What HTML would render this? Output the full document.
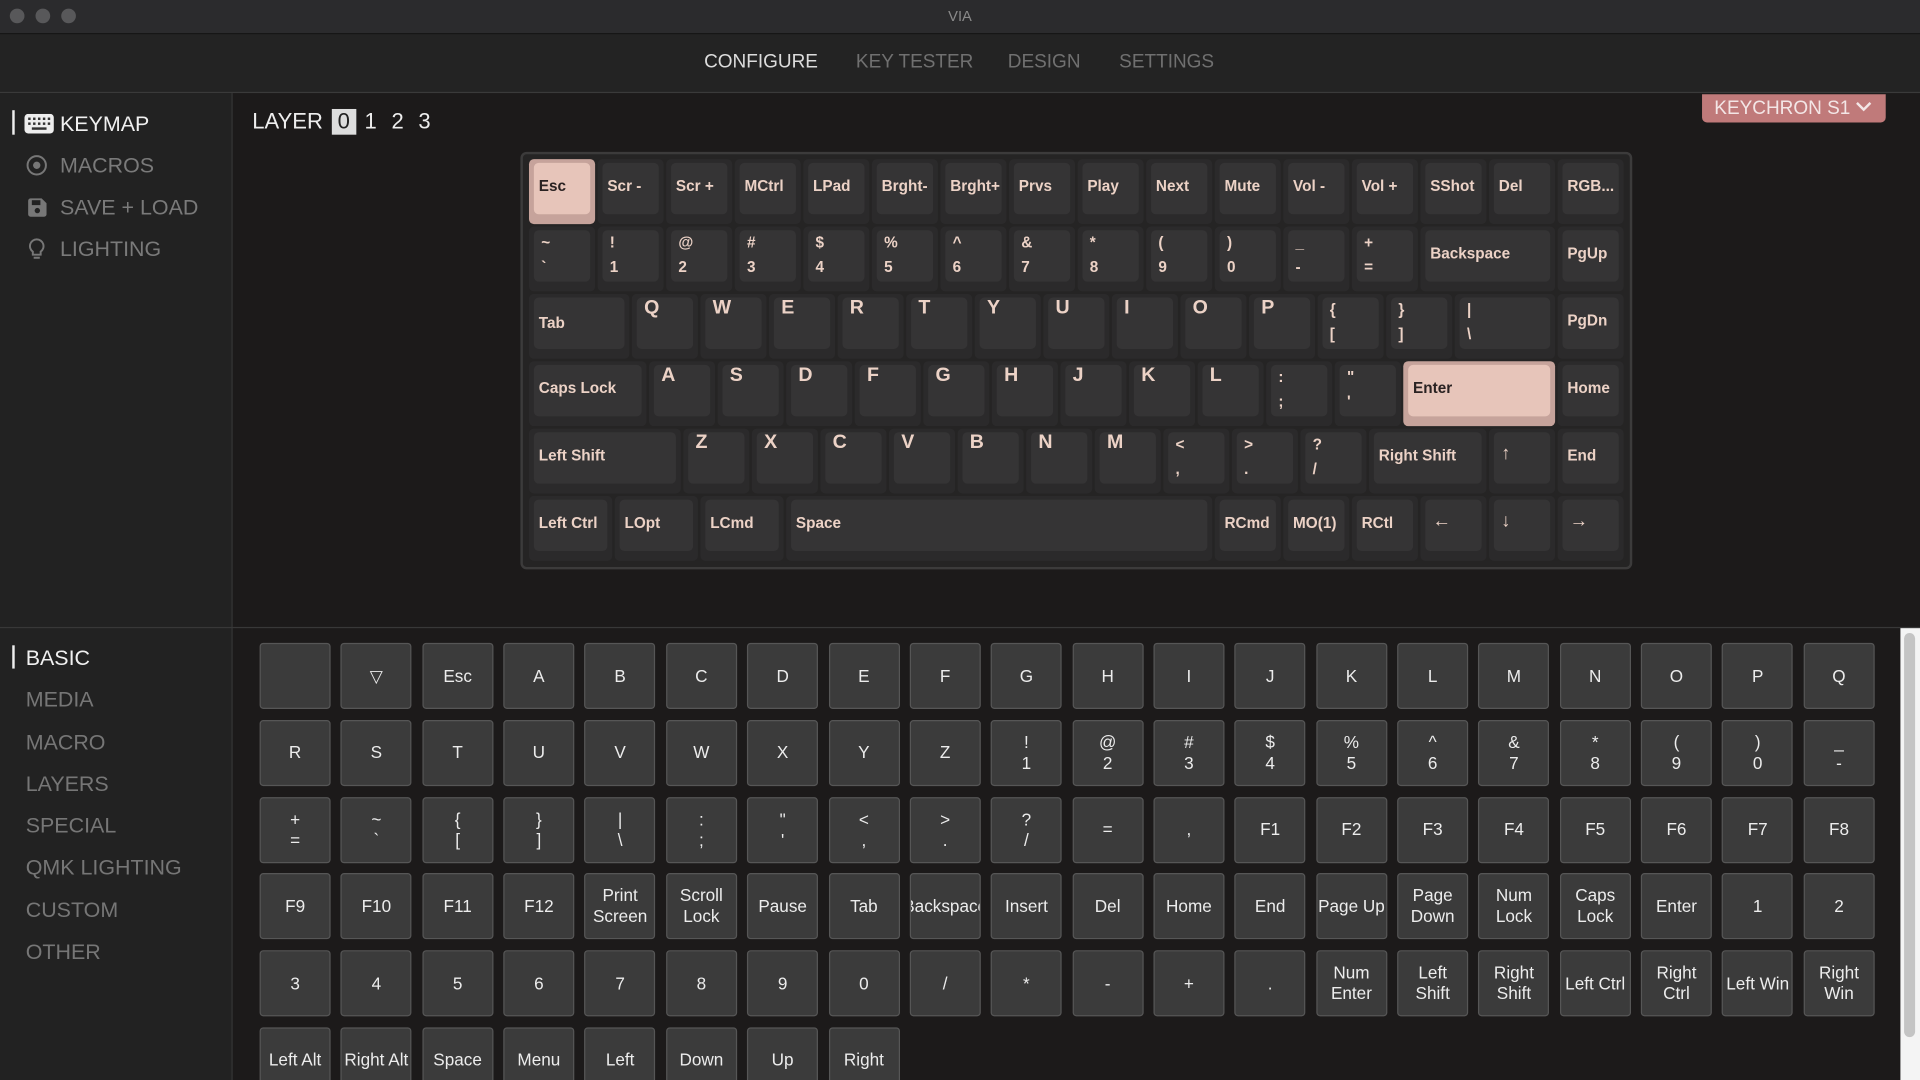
<!DOCTYPE html>
<html><head><meta charset="utf-8"><style>
html,body{margin:0;padding:0;background:#111;overflow:hidden;width:1920px;height:1080px}
#app{position:relative;width:1568px;height:882px;transform:scale(1.22449);transform-origin:0 0;overflow:hidden;background:#1c1a1a;font-family:"Liberation Sans",sans-serif}
.title{position:absolute;left:0;top:0;width:1568px;height:27px;background:#2b2b2d;border-bottom:1px solid #151515}
.dot{position:absolute;top:7px;width:12px;height:12px;border-radius:50%;background:#58585a}
.title .t{position:absolute;left:0;right:0;top:6px;text-align:center;color:#8a8a8a;font-size:12px}
.nav{position:absolute;left:0;top:28px;width:1568px;height:47px;background:#232323;border-bottom:1px solid #3a3a3a}
.nav span{position:absolute;top:14px;font-size:15.5px;color:#707070}
.side{position:absolute;left:0;top:76px;width:189px;height:806px;background:#222;border-right:1px solid #353535}
.hline{position:absolute;left:0;top:512px;width:1568px;height:1px;background:#383838}
.menu{position:absolute;left:49px;font-size:17.5px;color:#7a7a7a}
.menu.on{color:#f0f0f0}
.ic{position:absolute;left:20px}
.bar{position:absolute;left:10px;width:2px;background:#eee}
.cat{position:absolute;left:21px;font-size:17.5px;color:#767676}
.cat.on{color:#f0f0f0}
.layer{position:absolute;left:206px;top:89px;font-size:18px;color:#eee}
.layer b{font-weight:normal;display:inline-block;width:20px;text-align:center;margin-left:2px}
.layer b.sel{background:#ddd;color:#222}
.kb{position:absolute;left:425px;top:124px;width:904px;height:337px;background:#252424;border:2px solid #3c3b3b;border-radius:5px}
.r{position:absolute;left:0;height:53px}
.k{position:absolute;top:0;height:53px;width:54px;background:#2b2a2b;border-radius:4px}
.k .c{position:absolute;left:4px;right:4px;top:3px;bottom:8px;background:#353435;border-radius:4px}
.k i{position:absolute;left:8px;top:14px;font-style:normal;font-weight:bold;font-size:12.5px;color:#ecd2c6;white-space:nowrap;line-height:16px}
.k i.two{top:3px;line-height:20px;left:10px}
.k i.big{top:4px;font-size:16px;left:10px}
.k i.ar{font-size:15px;top:13px;left:10px}
.k.hl{background:#c6a39b}
.k.hl .c{background:#e7c5ba}
.k.hl i{color:#2a2222}
.btn{position:absolute;left:1390px;top:77px;width:150px;height:23px;background:#c07a7a;border-radius:0 0 4px 4px;color:#f3e6e6;font-size:15.5px;line-height:23px;padding-left:10px;box-sizing:border-box}
.grid{position:absolute;left:212px;top:525px;display:grid;grid-template-columns:repeat(20,58px);column-gap:8.37px;row-gap:8.8px;grid-auto-rows:54px}
.grid div{background:#3b3b3b;border:1px solid #565656;border-radius:3px;box-sizing:border-box;color:#ececec;font-size:14px;line-height:17px;display:flex;align-items:center;justify-content:center;text-align:center;overflow:hidden;white-space:nowrap}
.sb{position:absolute;left:1552px;top:513px;width:16px;height:369px;background:#f4f4f4}
.sb div{position:absolute;left:3px;top:4px;width:9px;height:330px;border-radius:5px;background:#c4c4c4}
</style></head><body><div id="app">
<div class="title"><div class="dot" style="left:8px"></div><div class="dot" style="left:29px"></div><div class="dot" style="left:50px"></div><div class="t">VIA</div></div>
<div class="nav"><span style="left:575px;color:#dcdcdc">CONFIGURE</span><span style="left:699px">KEY TESTER</span><span style="left:823px">DESIGN</span><span style="left:914px">SETTINGS</span></div>
<div class="side"></div>
<div class="hline"></div>
<div class="bar" style="top:90px;height:20px"></div>
<svg class="ic" style="top:93px" width="24" height="16" viewBox="0 0 24 16"><rect x="0" y="0" width="24" height="16" rx="3" fill="#eee"/><g fill="#333"><rect x="3" y="3" width="2" height="2"/><rect x="7" y="3" width="2" height="2"/><rect x="11" y="3" width="2" height="2"/><rect x="15" y="3" width="2" height="2"/><rect x="19" y="3" width="2" height="2"/><rect x="3" y="7" width="2" height="2"/><rect x="7" y="7" width="2" height="2"/><rect x="11" y="7" width="2" height="2"/><rect x="15" y="7" width="2" height="2"/><rect x="19" y="7" width="2" height="2"/><rect x="6" y="11" width="12" height="2"/></g></svg>
<div class="menu on" style="top:91px">KEYMAP</div>
<svg class="ic" style="top:126px;left:21px" width="18" height="18" viewBox="0 0 18 18"><circle cx="9" cy="9" r="7.5" fill="none" stroke="#777" stroke-width="1.6"/><circle cx="9" cy="9" r="3" fill="#777"/></svg>
<div class="menu" style="top:125px">MACROS</div>
<svg class="ic" style="top:161px;left:22px" width="17" height="17" viewBox="0 0 17 17"><path d="M1 3a2 2 0 0 1 2-2h9l4 4v9a2 2 0 0 1-2 2H3a2 2 0 0 1-2-2z" fill="#777"/><rect x="4" y="2.5" width="7" height="4" fill="#222"/><circle cx="8.5" cy="11" r="2.2" fill="#222"/></svg>
<div class="menu" style="top:159px">SAVE + LOAD</div>
<svg class="ic" style="top:194px;left:23px" width="14" height="19" viewBox="0 0 14 19"><path d="M7 1.5a5.5 5.5 0 0 0-3.2 10v2.5h6.4v-2.5A5.5 5.5 0 0 0 7 1.5z" fill="none" stroke="#777" stroke-width="1.6"/><path d="M4.5 16.5h5" stroke="#777" stroke-width="1.6"/></svg>
<div class="menu" style="top:193px">LIGHTING</div>

<div class="bar" style="top:527px;height:19px"></div>
<div class="cat on" style="top:527px">BASIC</div>
<div class="cat" style="top:561px">MEDIA</div>
<div class="cat" style="top:596px">MACRO</div>
<div class="cat" style="top:630px">LAYERS</div>
<div class="cat" style="top:664px">SPECIAL</div>
<div class="cat" style="top:698px">QMK LIGHTING</div>
<div class="cat" style="top:733px">CUSTOM</div>
<div class="cat" style="top:767px">OTHER</div>

<div class="layer">LAYER <b class="sel">0</b><b>1</b><b>2</b><b>3</b></div>
<div class="btn">KEYCHRON S1 <svg width="14" height="10" viewBox="0 0 14 10" style="vertical-align:1px"><path d="M1.5 2l5.5 5.5 5.5-5.5" fill="none" stroke="#f3e6e6" stroke-width="2"/></svg></div>

<div class="kb">
<div class="r" style="top:4px">
<div class="k hl" style="left:5px"><div class="c"></div><i>Esc</i></div>
<div class="k" style="left:61px"><div class="c"></div><i>Scr -</i></div>
<div class="k" style="left:117px"><div class="c"></div><i>Scr +</i></div>
<div class="k" style="left:173px"><div class="c"></div><i>MCtrl</i></div>
<div class="k" style="left:229px"><div class="c"></div><i>LPad</i></div>
<div class="k" style="left:285px"><div class="c"></div><i>Brght-</i></div>
<div class="k" style="left:341px"><div class="c"></div><i>Brght+</i></div>
<div class="k" style="left:397px"><div class="c"></div><i>Prvs</i></div>
<div class="k" style="left:453px"><div class="c"></div><i>Play</i></div>
<div class="k" style="left:509px"><div class="c"></div><i>Next</i></div>
<div class="k" style="left:565px"><div class="c"></div><i>Mute</i></div>
<div class="k" style="left:621px"><div class="c"></div><i>Vol -</i></div>
<div class="k" style="left:677px"><div class="c"></div><i>Vol +</i></div>
<div class="k" style="left:733px"><div class="c"></div><i>SShot</i></div>
<div class="k" style="left:789px"><div class="c"></div><i>Del</i></div>
<div class="k" style="left:845px"><div class="c"></div><i>RGB...</i></div>
</div>
<div class="r" style="top:59px">
<div class="k" style="left:5px"><div class="c"></div><i class="two">~<br>`</i></div>
<div class="k" style="left:61px"><div class="c"></div><i class="two">!<br>1</i></div>
<div class="k" style="left:117px"><div class="c"></div><i class="two">@<br>2</i></div>
<div class="k" style="left:173px"><div class="c"></div><i class="two">#<br>3</i></div>
<div class="k" style="left:229px"><div class="c"></div><i class="two">$<br>4</i></div>
<div class="k" style="left:285px"><div class="c"></div><i class="two">%<br>5</i></div>
<div class="k" style="left:341px"><div class="c"></div><i class="two">^<br>6</i></div>
<div class="k" style="left:397px"><div class="c"></div><i class="two">&amp;<br>7</i></div>
<div class="k" style="left:453px"><div class="c"></div><i class="two">*<br>8</i></div>
<div class="k" style="left:509px"><div class="c"></div><i class="two">(<br>9</i></div>
<div class="k" style="left:565px"><div class="c"></div><i class="two">)<br>0</i></div>
<div class="k" style="left:621px"><div class="c"></div><i class="two">_<br>-</i></div>
<div class="k" style="left:677px"><div class="c"></div><i class="two">+<br>=</i></div>
<div class="k" style="left:733px;width:110px"><div class="c"></div><i>Backspace</i></div>
<div class="k" style="left:845px"><div class="c"></div><i>PgUp</i></div>
</div>
<div class="r" style="top:114px">
<div class="k" style="left:5px;width:82px"><div class="c"></div><i style="top:16px">Tab</i></div>
<div class="k" style="left:89px"><div class="c"></div><i class="big">Q</i></div>
<div class="k" style="left:145px"><div class="c"></div><i class="big">W</i></div>
<div class="k" style="left:201px"><div class="c"></div><i class="big">E</i></div>
<div class="k" style="left:257px"><div class="c"></div><i class="big">R</i></div>
<div class="k" style="left:313px"><div class="c"></div><i class="big">T</i></div>
<div class="k" style="left:369px"><div class="c"></div><i class="big">Y</i></div>
<div class="k" style="left:425px"><div class="c"></div><i class="big">U</i></div>
<div class="k" style="left:481px"><div class="c"></div><i class="big">I</i></div>
<div class="k" style="left:537px"><div class="c"></div><i class="big">O</i></div>
<div class="k" style="left:593px"><div class="c"></div><i class="big">P</i></div>
<div class="k" style="left:649px"><div class="c"></div><i class="two">{<br>[</i></div>
<div class="k" style="left:705px"><div class="c"></div><i class="two">}<br>]</i></div>
<div class="k" style="left:761px;width:82px"><div class="c"></div><i class="two">|<br>\</i></div>
<div class="k" style="left:845px"><div class="c"></div><i>PgDn</i></div>
</div>
<div class="r" style="top:169px">
<div class="k" style="left:5px;width:96px"><div class="c"></div><i>Caps Lock</i></div>
<div class="k" style="left:103px"><div class="c"></div><i class="big">A</i></div>
<div class="k" style="left:159px"><div class="c"></div><i class="big">S</i></div>
<div class="k" style="left:215px"><div class="c"></div><i class="big">D</i></div>
<div class="k" style="left:271px"><div class="c"></div><i class="big">F</i></div>
<div class="k" style="left:327px"><div class="c"></div><i class="big">G</i></div>
<div class="k" style="left:383px"><div class="c"></div><i class="big">H</i></div>
<div class="k" style="left:439px"><div class="c"></div><i class="big">J</i></div>
<div class="k" style="left:495px"><div class="c"></div><i class="big">K</i></div>
<div class="k" style="left:551px"><div class="c"></div><i class="big">L</i></div>
<div class="k" style="left:607px"><div class="c"></div><i class="two">:<br>;</i></div>
<div class="k" style="left:663px"><div class="c"></div><i class="two">"<br>'</i></div>
<div class="k hl" style="left:719px;width:124px"><div class="c"></div><i>Enter</i></div>
<div class="k" style="left:845px"><div class="c"></div><i>Home</i></div>
</div>
<div class="r" style="top:224px">
<div class="k" style="left:5px;width:124px"><div class="c"></div><i>Left Shift</i></div>
<div class="k" style="left:131px"><div class="c"></div><i class="big">Z</i></div>
<div class="k" style="left:187px"><div class="c"></div><i class="big">X</i></div>
<div class="k" style="left:243px"><div class="c"></div><i class="big">C</i></div>
<div class="k" style="left:299px"><div class="c"></div><i class="big">V</i></div>
<div class="k" style="left:355px"><div class="c"></div><i class="big">B</i></div>
<div class="k" style="left:411px"><div class="c"></div><i class="big">N</i></div>
<div class="k" style="left:467px"><div class="c"></div><i class="big">M</i></div>
<div class="k" style="left:523px"><div class="c"></div><i class="two">&lt;<br>,</i></div>
<div class="k" style="left:579px"><div class="c"></div><i class="two">&gt;<br>.</i></div>
<div class="k" style="left:635px"><div class="c"></div><i class="two">?<br>/</i></div>
<div class="k" style="left:691px;width:96px"><div class="c"></div><i>Right Shift</i></div>
<div class="k" style="left:789px"><div class="c"></div><i class="ar">↑</i></div>
<div class="k" style="left:845px"><div class="c"></div><i>End</i></div>
</div>
<div class="r" style="top:279px">
<div class="k" style="left:5px;width:68px"><div class="c"></div><i>Left Ctrl</i></div>
<div class="k" style="left:75px;width:68px"><div class="c"></div><i>LOpt</i></div>
<div class="k" style="left:145px;width:68px"><div class="c"></div><i>LCmd</i></div>
<div class="k" style="left:215px;width:348px"><div class="c"></div><i>Space</i></div>
<div class="k" style="left:565px"><div class="c"></div><i>RCmd</i></div>
<div class="k" style="left:621px"><div class="c"></div><i>MO(1)</i></div>
<div class="k" style="left:677px"><div class="c"></div><i>RCtl</i></div>
<div class="k" style="left:733px"><div class="c"></div><i class="ar">←</i></div>
<div class="k" style="left:789px"><div class="c"></div><i class="ar">↓</i></div>
<div class="k" style="left:845px"><div class="c"></div><i class="ar">→</i></div>
</div>
</div>

<div class="grid">
<div></div><div>▽</div><div>Esc</div><div>A</div><div>B</div><div>C</div><div>D</div><div>E</div><div>F</div><div>G</div><div>H</div><div>I</div><div>J</div><div>K</div><div>L</div><div>M</div><div>N</div><div>O</div><div>P</div><div>Q</div>
<div>R</div><div>S</div><div>T</div><div>U</div><div>V</div><div>W</div><div>X</div><div>Y</div><div>Z</div><div>!<br>1</div><div>@<br>2</div><div>#<br>3</div><div>$<br>4</div><div>%<br>5</div><div>^<br>6</div><div>&amp;<br>7</div><div>*<br>8</div><div>(<br>9</div><div>)<br>0</div><div>_<br>-</div>
<div>+<br>=</div><div>~<br>`</div><div>{<br>[</div><div>}<br>]</div><div>|<br>\</div><div>:<br>;</div><div>"<br>'</div><div>&lt;<br>,</div><div>&gt;<br>.</div><div>?<br>/</div><div>=</div><div>,</div><div>F1</div><div>F2</div><div>F3</div><div>F4</div><div>F5</div><div>F6</div><div>F7</div><div>F8</div>
<div>F9</div><div>F10</div><div>F11</div><div>F12</div><div>Print<br>Screen</div><div>Scroll<br>Lock</div><div>Pause</div><div>Tab</div><div>Backspace</div><div>Insert</div><div>Del</div><div>Home</div><div>End</div><div>Page Up</div><div>Page<br>Down</div><div>Num<br>Lock</div><div>Caps<br>Lock</div><div>Enter</div><div>1</div><div>2</div>
<div>3</div><div>4</div><div>5</div><div>6</div><div>7</div><div>8</div><div>9</div><div>0</div><div>/</div><div>*</div><div>-</div><div>+</div><div>.</div><div>Num<br>Enter</div><div>Left<br>Shift</div><div>Right<br>Shift</div><div>Left Ctrl</div><div>Right<br>Ctrl</div><div>Left Win</div><div>Right<br>Win</div>
<div>Left Alt</div><div>Right Alt</div><div>Space</div><div>Menu</div><div>Left</div><div>Down</div><div>Up</div><div>Right</div>
</div>
<div class="sb"><div></div></div>
</div></body></html>
